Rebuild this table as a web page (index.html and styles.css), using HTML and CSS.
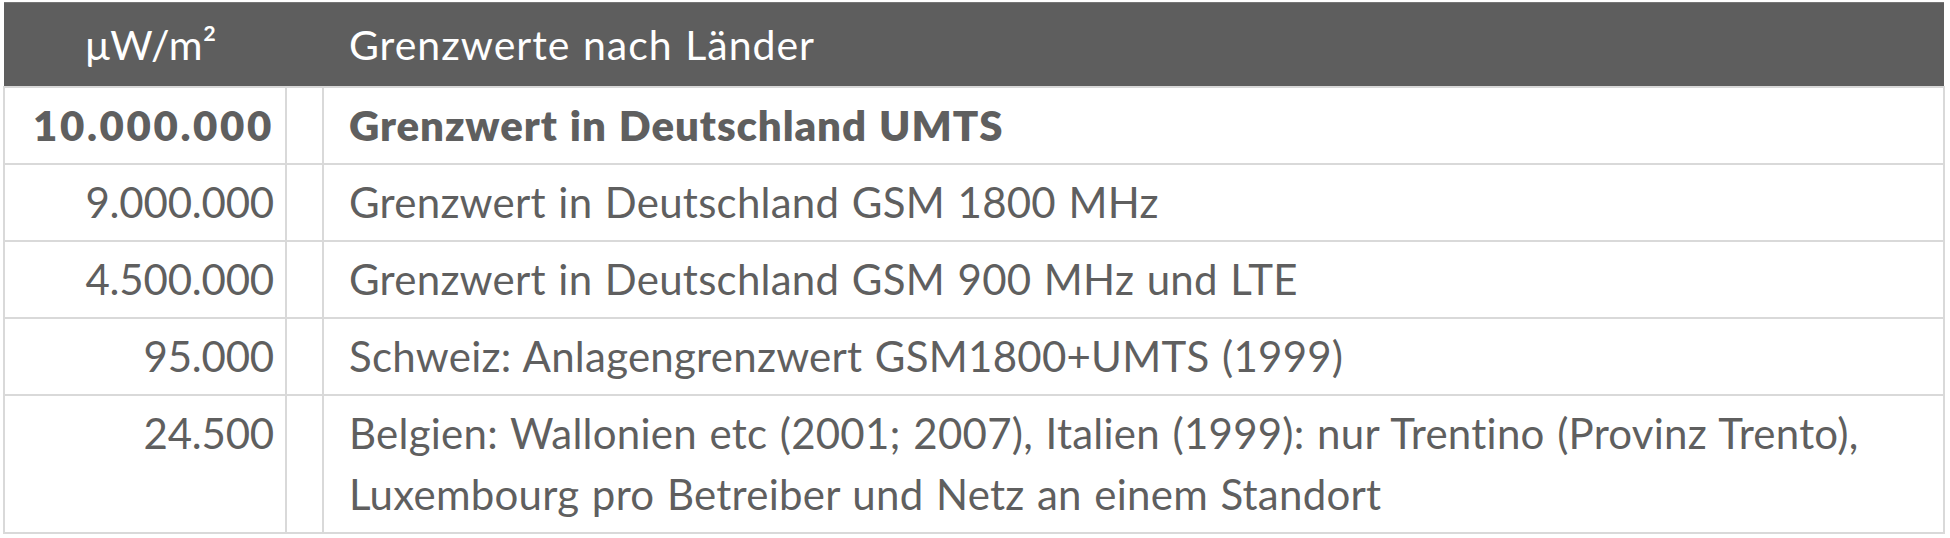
FILE: index.html
```html
<!DOCTYPE html>
<html lang="de">
<head>
<meta charset="utf-8">
<title>Grenzwerte</title>
<link rel="stylesheet" href="styles.css">
</head>
<body>
<div class="wrap">
<table class="limits">
  <colgroup>
    <col class="c-val">
    <col class="c-gap">
    <col class="c-desc">
  </colgroup>
  <thead>
    <tr>
      <th class="h-val">μW/m²</th>
      <th class="h-desc" colspan="2">Grenzwerte nach Länder</th>
    </tr>
  </thead>
  <tbody>
    <tr class="strong">
      <td class="val">10.000.000</td>
      <td class="gap"></td>
      <td class="desc">Grenzwert in Deutschland UMTS</td>
    </tr>
    <tr>
      <td class="val">9.000.000</td>
      <td class="gap"></td>
      <td class="desc">Grenzwert in Deutschland GSM 1800 MHz</td>
    </tr>
    <tr>
      <td class="val">4.500.000</td>
      <td class="gap"></td>
      <td class="desc">Grenzwert in Deutschland GSM 900 MHz und LTE</td>
    </tr>
    <tr>
      <td class="val">95.000</td>
      <td class="gap"></td>
      <td class="desc">Schweiz: Anlagengrenzwert GSM1800+UMTS (1999)</td>
    </tr>
    <tr>
      <td class="val">24.500</td>
      <td class="gap"></td>
      <td class="desc">Belgien: Wallonien etc (2001; 2007), Italien (1999): nur Trentino (Provinz Trento),<br>Luxembourg pro Betreiber und Netz an einem Standort</td>
    </tr>
  </tbody>
</table>
</div>
</body>
</html>
```

FILE: styles.css
```css
html, body {
  margin: 0;
  padding: 0;
  background: #ffffff;
}

.wrap {
  padding: 2px 5px 0 3px;
}

.limits {
  width: 1942px;
  border-collapse: collapse;
  table-layout: fixed;
  font-family: "Lato", "Noto Sans", sans-serif;
  color: #5f5f5f;
}

.c-val { width: 282px; }
.c-gap { width: 37px; }

.limits thead th {
  background: #5e5e5e;
  color: #ffffff;
  font-weight: 400;
  font-size: 41px;
  line-height: 57px;
  height: 83px;
  padding: 0;
  border-top: 1px solid #767676;
  text-align: left;
  letter-spacing: 0.3px;
  word-spacing: 1px;
}

.limits thead .h-val {
  text-align: center;
  padding-left: 12px;
}

.limits thead .h-desc {
  padding-left: 63px;
  letter-spacing: 1px;
}

.limits tbody td {
  border: 2px solid #d9d9d9;
  font-size: 42px;
  line-height: 61px;
  padding: 7px 0;
  vertical-align: top;
  letter-spacing: 0.25px;
  word-spacing: 1.5px;
}

.limits tbody .val {
  text-align: right;
  padding-right: 11px;
  letter-spacing: -0.2px;
}

.limits tbody .desc {
  padding-left: 25px;
}

.limits tbody tr.strong td {
  font-weight: 800;
  letter-spacing: 0.9px;
}

.limits tbody tr.strong .val {
  letter-spacing: 2.6px;
}
```
